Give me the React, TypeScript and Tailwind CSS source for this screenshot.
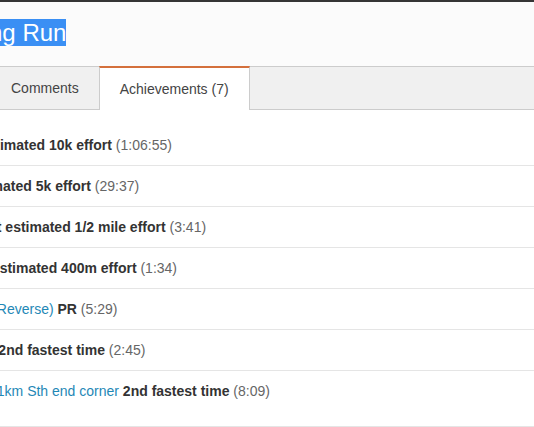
const rows = [
  { lead: "", bold: "New estimated 10k effort", time: "(1:06:55)" },
  { lead: "", bold: "#2 estimated 5k effort", time: "(29:37)" },
  { lead: "", bold: "3rd best estimated 1/2 mile effort", time: "(3:41)" },
  { lead: "", bold: "Top 5: estimated 400m effort", time: "(1:34)" },
  { lead: "Bay St (Reverse)", bold: "PR", time: "(5:29)" },
  { lead: "The Hill", bold: "2nd fastest time", time: "(2:45)" },
  { lead: "Park St 1km Sth end corner", bold: "2nd fastest time", time: "(8:09)" },
];

export default function App() {
  return (
    <div className="h-[427px] w-[534px] overflow-hidden bg-white font-['Liberation_Sans',Arial,sans-serif]">
      <div className="h-[2px] bg-[#353535]" />

      <div className="h-16 overflow-hidden bg-[#fbfbfb] pt-[17px]">
        <h1 className="-ml-[71px] whitespace-nowrap text-[24px] leading-[27px] font-normal">
          <span className="bg-[#3a8ff4] text-white">Morning Run</span>
        </h1>
      </div>

      <div className="flex h-[44px] border-y border-[#cccccc] bg-[#f0f0f0] text-[14px] text-[#444]">
        <div className="-ml-[9px] flex items-center px-5">Comments</div>
        <div className="-my-px flex items-center border-x border-t-2 border-x-[#cccccc] border-t-[#d4703c] bg-white px-5">
          Achievements (7)
        </div>
      </div>

      <ul className="-ml-[53px] border-b border-[#e5e5e5] pb-[15px] pt-[15px] text-[14px] leading-5">
        {rows.map((row, i) => (
          <li
            key={i}
            className="whitespace-nowrap border-t border-[#e5e5e5] py-[10px] first:border-t-0"
          >
            {row.lead && (
              <>
                <a className="text-[#1f88b6]">{row.lead}</a>{" "}
              </>
            )}
            <strong className="font-bold text-[#333]">{row.bold}</strong>{" "}
            <span className="text-[#666]">{row.time}</span>
          </li>
        ))}
      </ul>
    </div>
  );
}
